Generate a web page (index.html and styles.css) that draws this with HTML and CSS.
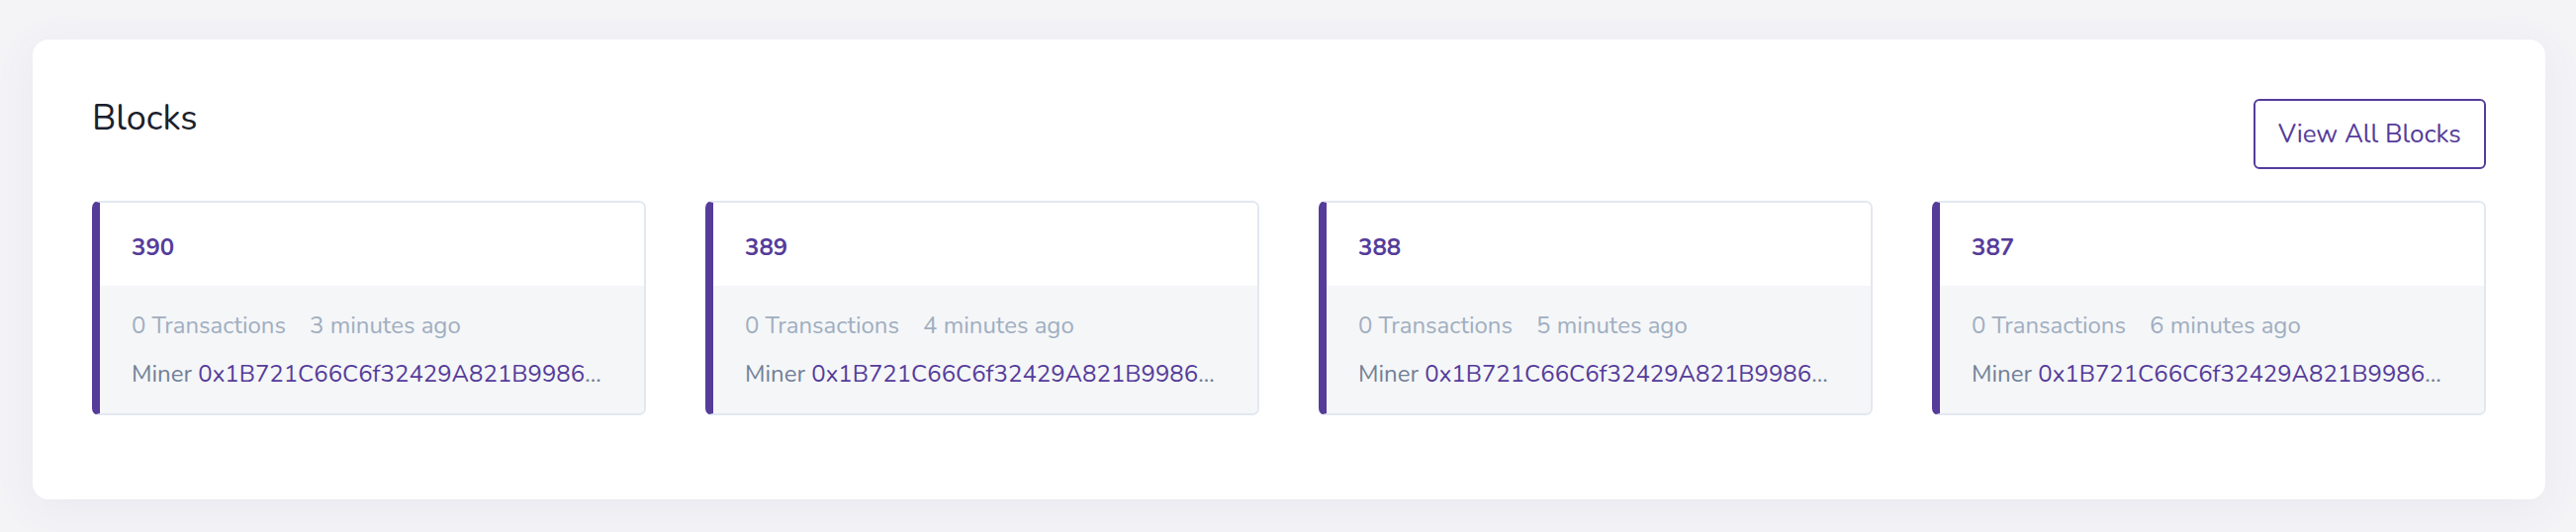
FILE: index.html
```html
<!DOCTYPE html>
<html lang="en">
<head>
<meta charset="utf-8">
<title>Blocks</title>
<link rel="stylesheet" href="styles.css">
</head>
<body>
<section class="panel">
  <div class="panel-head">
    <h2 class="title">Blocks</h2>
    <a class="btn" href="#">View All Blocks</a>
  </div>
  <div class="cards">
    <div class="card">
      <div class="card-head"><a class="num" href="#">390</a></div>
      <div class="card-body">
        <div class="meta"><span>0 Transactions</span><span>3 minutes ago</span></div>
        <div class="miner">Miner <a href="#" class="addr">0x1B721C66C6f32429A821B9986B4F6b4D7e4c4F5e</a></div>
      </div>
    </div>
    <div class="card">
      <div class="card-head"><a class="num" href="#">389</a></div>
      <div class="card-body">
        <div class="meta"><span>0 Transactions</span><span>4 minutes ago</span></div>
        <div class="miner">Miner <a href="#" class="addr">0x1B721C66C6f32429A821B9986B4F6b4D7e4c4F5e</a></div>
      </div>
    </div>
    <div class="card">
      <div class="card-head"><a class="num" href="#">388</a></div>
      <div class="card-body">
        <div class="meta"><span>0 Transactions</span><span>5 minutes ago</span></div>
        <div class="miner">Miner <a href="#" class="addr">0x1B721C66C6f32429A821B9986B4F6b4D7e4c4F5e</a></div>
      </div>
    </div>
    <div class="card">
      <div class="card-head"><a class="num" href="#">387</a></div>
      <div class="card-body">
        <div class="meta"><span>0 Transactions</span><span>6 minutes ago</span></div>
        <div class="miner">Miner <a href="#" class="addr">0x1B721C66C6f32429A821B9986B4F6b4D7e4c4F5e</a></div>
      </div>
    </div>
  </div>
</section>
</body>
</html>
```
FILE: styles.css
```css
* { box-sizing: border-box; }
html, body { margin: 0; padding: 0; }
body {
  background: #f4f4f7;
  font-family: "Nunito", Lato, "Noto Sans", sans-serif;
  padding: 40px 31px 0 33px;
  height: 538px;
  overflow: hidden;
}
a { text-decoration: none; }
.panel {
  background: #ffffff;
  border-radius: 16px;
  box-shadow: 0 8px 40px rgba(90, 90, 150, 0.08);
  padding: 60px 60px 85px;
}
.panel-head {
  display: flex;
  justify-content: space-between;
  align-items: flex-start;
}
.title {
  margin: 2px 0 0;
  font-size: 36px;
  line-height: 36px;
  font-weight: 400;
  color: #1a202c;
}
.btn {
  display: flex;
  align-items: center;
  justify-content: center;
  height: 71px;
  width: 235px;
  border: 2px solid #553c9a;
  border-radius: 6px;
  color: #553c9a;
  font-size: 26px;
}
.cards {
  margin-top: 32px;
  display: grid;
  grid-template-columns: repeat(4, 1fr);
  gap: 60px;
}
.card {
  border: 2px solid #e2e8f0;
  border-left: 8px solid #553c9a;
  border-radius: 7px;
  overflow: hidden;
  min-width: 0;
}
.card-head {
  height: 84px;
  display: flex;
  align-items: center;
  padding: 6px 32px 0;
  background: #fff;
}
.num {
  color: #553c9a;
  font-weight: 700;
  font-size: 24px;
}
.card-body {
  background: #f5f6f8;
  padding: 16px 32px 15px;
  font-size: 24px;
  line-height: 49px;
}
.meta {
  display: flex;
  gap: 24px;
  color: #a0aec0;
}
.miner {
  color: #718096;
  white-space: nowrap;
  overflow: hidden;
  text-overflow: ellipsis;
}
.addr { color: #553c9a; }
```
